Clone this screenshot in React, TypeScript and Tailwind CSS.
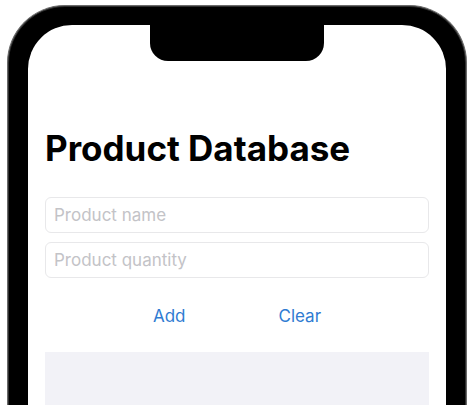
import React from "react"

export default function App() {
  return (
    <div
      className="w-[474px] h-[405px] overflow-hidden bg-white pt-[5px] px-[7px]"
      style={{ fontFamily: "Inter, 'Noto Sans', sans-serif" }}
    >
      {/* phone frame */}
      <div className="h-[440px] rounded-t-[58px] bg-[#2e2e2e] border-t border-x border-[#6a6a6a] p-[1px] pb-0">
        <div className="h-full rounded-t-[56px] bg-black px-[19px] pt-[18px]">
          <div className="h-full rounded-t-[44px] bg-white flex flex-col">
            <div className="flex justify-center">
              <div className="w-[174px] h-[36px] bg-black rounded-b-[18px]" />
            </div>

            <div className="px-[17px] flex flex-col">
              <h1 className="mt-[66px] text-[35px] leading-[42px] font-bold text-black">
                Product Database
              </h1>

              <div className="mt-[28px] flex flex-col gap-[9px]">
                <input
                  placeholder="Product name"
                  className="h-[36px] w-full rounded-[6px] border border-[#e8e8ea] px-[8px] text-[17px] outline-none placeholder:text-[#c3c3c7]"
                />
                <input
                  placeholder="Product quantity"
                  className="h-[36px] w-full rounded-[6px] border border-[#e8e8ea] px-[8px] text-[17px] outline-none placeholder:text-[#c3c3c7]"
                />
              </div>

              <div className="mt-[27px] flex justify-center gap-[93px]">
                <button className="text-[17px] leading-[22px] text-[#2f7bd2]">Add</button>
                <button className="text-[17px] leading-[22px] text-[#2f7bd2]">Clear</button>
              </div>

              <div className="mt-[25px] h-[120px] bg-[#f2f2f7]" />
            </div>
          </div>
        </div>
      </div>
    </div>
  )
}
